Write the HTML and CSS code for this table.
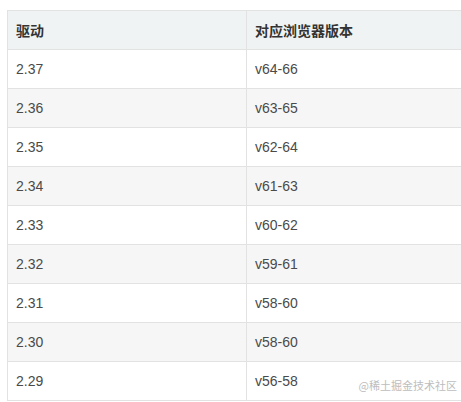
FILE: index.html
```html
<!DOCTYPE html>
<html lang="zh-CN">
<head>
<meta charset="utf-8">
<title>驱动版本</title>
<link rel="stylesheet" href="styles.css">
</head>
<body>
<div class="wrap">
  <table class="tbl">
    <thead>
      <tr><th>驱动</th><th>对应浏览器版本</th></tr>
    </thead>
    <tbody>
      <tr><td>2.37</td><td>v64-66</td></tr>
      <tr><td>2.36</td><td>v63-65</td></tr>
      <tr><td>2.35</td><td>v62-64</td></tr>
      <tr><td>2.34</td><td>v61-63</td></tr>
      <tr><td>2.33</td><td>v60-62</td></tr>
      <tr><td>2.32</td><td>v59-61</td></tr>
      <tr><td>2.31</td><td>v58-60</td></tr>
      <tr><td>2.30</td><td>v58-60</td></tr>
      <tr><td>2.29</td><td>v56-58</td></tr>
    </tbody>
  </table>
</div>
<div class="watermark">@稀土掘金技术社区</div>
</body>
</html>
```

FILE: styles.css
```css
html, body {
  margin: 0;
  padding: 0;
  overflow: hidden;
  background: #fff;
}
body {
  position: relative;
  height: 402px;
  font-family: "Liberation Sans", Arial, "Noto Sans CJK SC", sans-serif;
  font-size: 14px;
  color: #333;
}
.wrap {
  padding: 10px 0 0 7px;
  width: 520px;
}
.tbl {
  border-collapse: collapse;
  width: 500px;
}
.tbl th, .tbl td {
  border: 1px solid #e2e2e2;
  padding: 8px 8px;
  line-height: 22px;
  text-align: left;
  height: 22px;
}
.tbl th {
  background: #f0f3f4;
  font-weight: bold;
  color: #333;
  font-family: "Noto Sans CJK SC", sans-serif;
  font-size: 14px;
}
.tbl th:first-child, .tbl td:first-child {
  width: 222px;
}
.tbl td {
  color: #4a4a4a;
}
.tbl tbody tr:nth-child(2n) td {
  background: #f6f6f6;
}
.watermark {
  position: absolute;
  right: 4px;
  top: 378px;
  font-family: "Noto Sans CJK SC", sans-serif;
  font-size: 11px;
  color: #bdbdbd;
  line-height: 14px;
}
```
